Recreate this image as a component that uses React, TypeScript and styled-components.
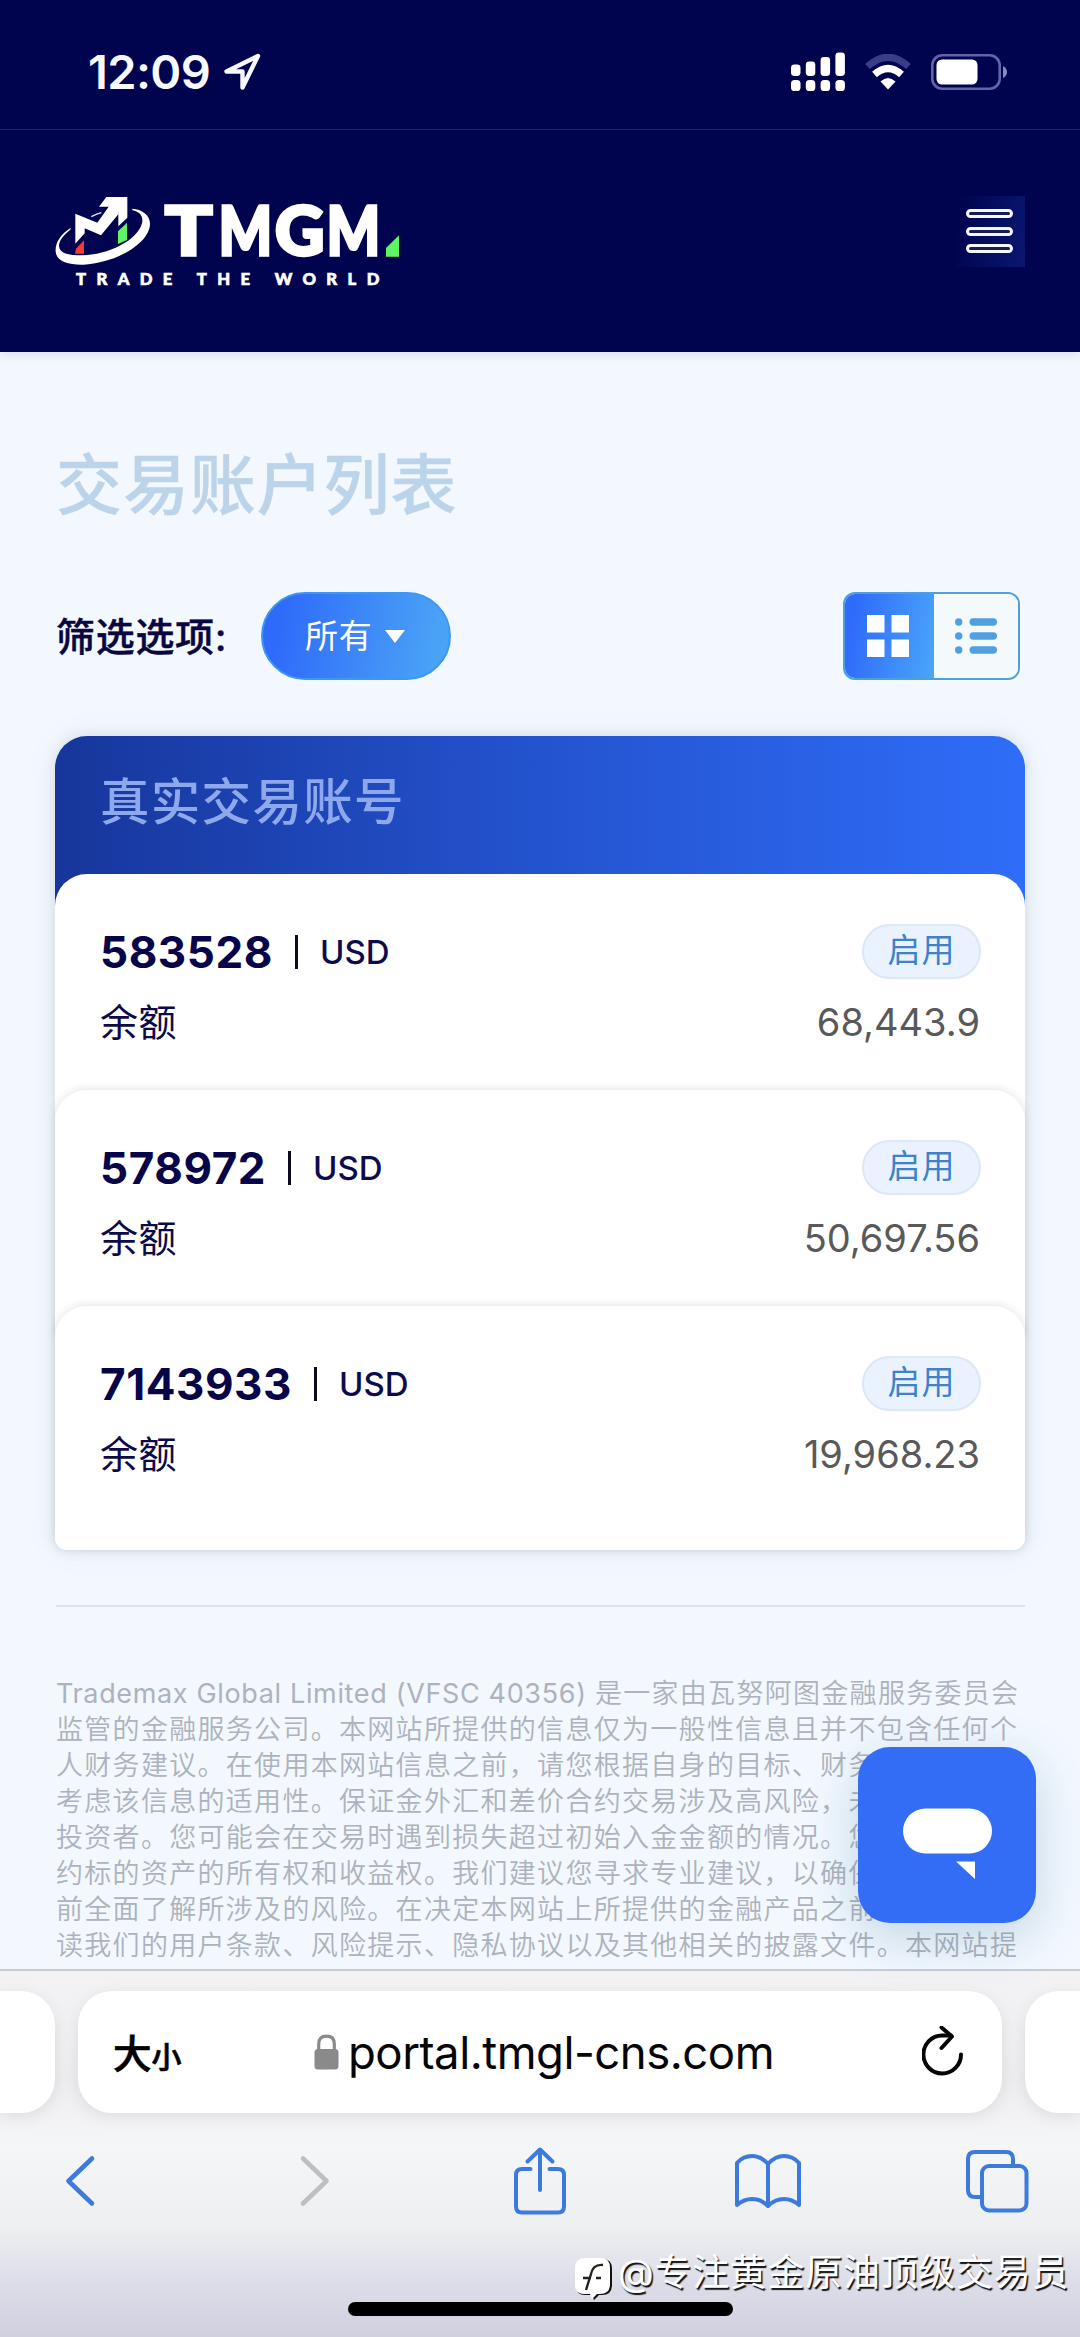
import React from 'react';
import styled, { createGlobalStyle } from 'styled-components';

const GlobalStyle = createGlobalStyle`
  * { box-sizing: border-box; }
  body { margin: 0; background: #f2f8fe; }
`;

const Screen = styled.div`
  position: relative;
  width: 1080px;
  height: 2337px;
  overflow: hidden;
  display: flex;
  flex-direction: column;
  background: #f2f8fe;
  font-family: Inter, 'Noto Sans CJK SC', sans-serif;
`;

const StatusBar = styled.div`
  flex: none;
  height: 130px;
  display: flex;
  align-items: center;
  justify-content: space-between;
  padding: 15px 72px 0 88px;
  background: #00044f;
  border-bottom: 1px solid #23276a;
`;

const StatusGroup = styled.div<{ $gap: number }>`
  display: flex;
  align-items: center;
  gap: ${(p) => p.$gap}px;
  height: 46px;
`;

const Clock = styled.span`
  font-size: 47px;
  font-weight: 600;
  line-height: 46px;
  letter-spacing: -0.6px;
  color: #f7f9ff;
`;

const SiteHeader = styled.header`
  flex: none;
  height: 222px;
  display: flex;
  align-items: flex-start;
  justify-content: space-between;
  padding: 65px 55px 0 55px;
  background: #00044f;
  box-shadow: 0 3px 10px rgba(20, 10, 60, 0.1);
`;

const LogoMark = styled.svg`
  overflow: visible;
`;

const MenuButton = styled.button`
  width: 71px;
  height: 71px;
  margin-top: 1px;
  padding: 13px 12px 14px;
  border: 0;
  display: flex;
  flex-direction: column;
  justify-content: space-between;
  background: linear-gradient(100deg, rgba(12, 28, 124, 0) 8%, #0a1770 100%);
`;

const MenuLine = styled.span`
  height: 9px;
  border: 3px solid #f5f7ff;
  border-radius: 5px;
  background: #1a1a55;
`;

const Main = styled.main`
  flex: none;
  height: 1617px;
  overflow: hidden;
  padding: 85px 56px 0;
`;

const PageTitle = styled.h1`
  margin: 0;
  font-size: 66px;
  font-weight: 500;
  line-height: 96px;
  letter-spacing: 0.9px;
  color: #bcd4ea;
  -webkit-text-stroke: 0.4px #bcd4ea;
`;

const FilterRow = styled.div`
  display: flex;
  align-items: center;
  height: 88px;
  margin-top: 59px;
  padding-right: 4px;
`;

const FilterLabel = styled.span`
  width: 205px;
  padding-bottom: 5px;
  font-size: 39px;
  font-weight: 500;
  letter-spacing: 0.7px;
  white-space: nowrap;
  color: #0a0640;
  -webkit-text-stroke: 0.4px #0a0640;
`;

const Select = styled.button`
  width: 190px;
  height: 88px;
  padding: 0 0 0 42px;
  display: flex;
  align-items: center;
  gap: 12px;
  border: 2px solid #3f97f4;
  border-radius: 44px;
  background: linear-gradient(100deg, #2f6afa 10%, #4aa2f6 90%);
  font-family: inherit;
  font-size: 33px;
  line-height: 40px;
  letter-spacing: 0.8px;
  color: #fff;
`;

const Toggle = styled.div`
  width: 177px;
  height: 88px;
  margin-left: auto;
  display: grid;
  grid-template-columns: 89px 1fr;
  overflow: hidden;
  border: 2px solid #4f9fdc;
  border-radius: 12px;
`;

const ToggleItem = styled.div<{ $active?: boolean }>`
  display: flex;
  align-items: center;
  justify-content: center;
  padding-right: ${(p) => (p.$active ? 4 : 0)}px;
  background: ${(p) => (p.$active ? 'linear-gradient(100deg, #2f6afa 10%, #4aa6fb 100%)' : '#f4f9fc')};
`;

const Accounts = styled.section`
  width: 970px;
  margin: 56px 0 0 -1px;
  border-radius: 32px 32px 12px 12px;
  background: linear-gradient(90deg, #17369b 0%, #2453cf 50%, #2f6df8 100%) top / 100% 190px no-repeat;
  box-shadow: 0 0 14px rgba(60, 70, 100, 0.14), 0 0 36px rgba(60, 70, 100, 0.05);
`;

const AccountsTitle = styled.h2`
  height: 138px;
  margin: 0;
  padding: 28px 0 0 45px;
  font-size: 49.5px;
  font-weight: 500;
  line-height: 76px;
  letter-spacing: 1.3px;
  color: #8ea8ec;
`;

const Account = styled.article<{ $last?: boolean; $lead?: boolean }>`
  height: ${(p) => (p.$last ? 244 : 248)}px;
  margin-bottom: ${(p) => (p.$last ? 0 : -32)}px;
  padding: 46px 45px 0 45px;
  border-radius: ${(p) => (p.$last ? '32px 32px 12px 12px' : '32px 32px 0 0')};
  background: #fff;
  position: relative;
  box-shadow: ${(p) => (p.$lead ? 'none' : '0 -2px 10px rgba(0, 0, 0, 0.09)')};
`;

const AccountLine = styled.div<{ $height: number }>`
  display: flex;
  align-items: center;
  height: ${(p) => p.$height}px;
`;

const AccountNumber = styled.strong`
  font-size: 44px;
  font-weight: 700;
  letter-spacing: 0.55px;
  color: #07044a;
`;

const Divider = styled.i`
  width: 3px;
  height: 34px;
  margin: 0 22px 0 22px;
  background: #0a0a20;
`;

const Currency = styled.span`
  font-size: 33px;
  font-weight: 500;
  color: #0d0b4c;
`;

const Status = styled.span`
  width: 119px;
  height: 55px;
  margin: -2px -1px 0 auto;
  padding-bottom: 2px;
  display: flex;
  align-items: center;
  justify-content: center;
  border: 2px solid #dde7f6;
  border-radius: 28px;
  background: #e9f2fe;
  font-size: 33px;
  line-height: 44px;
  letter-spacing: 1px;
  color: #3f82c8;
`;

const BalanceLabel = styled.span`
  padding-bottom: 5px;
  font-size: 38px;
  letter-spacing: 0.5px;
  color: #0d0b46;
`;

const Balance = styled.span`
  margin-left: auto;
  font-size: 38px;
  letter-spacing: 0;
  color: #595959;
`;

const Rule = styled.hr`
  width: 969px;
  height: 2px;
  margin: 55px 0 0;
  border: 0;
  background: #dce2e9;
`;

const Legal = styled.p`
  margin: 69px 0 0;
  font-size: 27px;
  font-weight: 350;
  line-height: 36px;
  letter-spacing: 1.3px;
  white-space: nowrap;
  color: #adb2bc;
`;

const LegalLine = styled.span`
  display: block;
  height: 36px;

  &:last-child { padding-top: 3px; }
`;

const CompanyName = styled.span`
  font-weight: 400;
  letter-spacing: 0.65px;
`;

const ChatButton = styled.button`
  position: absolute;
  left: 858px;
  top: 1747px;
  width: 178px;
  height: 176px;
  padding: 0;
  border: 0;
  border-radius: 32px;
  background: #336cf5;
  box-shadow: 0 14px 50px rgba(30, 90, 130, 0.22);
`;

const BrowserBar = styled.footer`
  position: relative;
  flex: 1;
  border-top: 2px solid #c9cbd1;
  display: flex;
  flex-direction: column;
  background: linear-gradient(180deg, #f3f3f5 0%, #ededef 30%, #f5f6f8 48%, #eeeff1 70%, #dddde9 85%, #d1d0df 100%);
`;

const TabStrip = styled.div`
  display: grid;
  grid-template-columns: 55px 924px 55px;
  gap: 23px;
  padding-top: 20px;
`;

const TabCard = styled.div<{ $side?: 'left' | 'right' }>`
  height: 122px;
  display: flex;
  align-items: center;
  background: #fff;
  border-radius: ${(p) => (p.$side === 'left' ? '0 34px 34px 0' : p.$side === 'right' ? '34px 0 0 34px' : '34px')};
  box-shadow: 0 4px 16px rgba(0, 0, 0, 0.08);
`;

const TextSize = styled.span`
  width: 236px;
  padding: 0 0 3px 35px;
  font-size: 38.5px;
  font-weight: 500;
  color: #000;
  -webkit-text-stroke: 0.7px #000;
  small { font-size: 30px; }
`;

const Address = styled.span`
  width: 574px;
  margin-left: 9px;
  font-size: 45.5px;
  letter-spacing: -0.5px;
  white-space: nowrap;
  color: #050505;
`;

const Tools = styled.nav`
  display: grid;
  grid-template-columns: 235px 214px 221px 231px 64px;
  align-items: center;
  height: 70px;
  margin-top: 33px;
  padding-left: 64px;
`;

const HomeIndicator = styled.div`
  width: 385px;
  height: 14px;
  margin: 86px 0 0 348px;
  border-radius: 7px;
  background: #000;
`;

const Watermark = styled.div`
  position: absolute;
  left: 574px;
  top: 2247px;
  height: 52px;
  display: flex;
  align-items: center;
  gap: 5px;
  white-space: nowrap;
  font-size: 37px;
  line-height: 52px;
  letter-spacing: 0.7px;
  color: #fff;
  text-shadow: 1.5px 1.5px 1px #111;

  svg { margin-top: 11px; }
`;

const Logo = () => (
  <LogoMark width="345" height="94" viewBox="45 45 1035 282">
    <path fill="#fff" d="M199 51H262V113L235 139V103L183 166L134 145V160L106 191V101L172 128L206 80H177Z" />
    <path fill="#fff" d="M93 143C60 163 45 190 47 215C50 245 85 255 130 254C225 250 330 190 330 131C330 104 305 88 277 86V91C299 95 311 108 306 130C292 182 205 225 125 226C85 226 58 220 57 198C57 183 70 165 90 150Z" />
    <path d="M154 110Q168 102 184 98" fill="none" stroke="#dfe6ff" strokeWidth="4" />
    <path fill="#f23b32" d="M105 221L108 206L132 181V221Z" />
    <path fill="#5ef464" d="M234 192V154L261 128V180Z" />
    <path fill="#5ef464" d="M1038 230V204L1077 166V230Z" />
    <g fill="#fff" fontFamily="Lato, sans-serif" fontWeight="900" fontSize="201" stroke="#fff" strokeWidth="10">
      <text x="375" y="225" textLength="142" lengthAdjust="spacingAndGlyphs">T</text>
      <text x="536" y="225" textLength="160" lengthAdjust="spacingAndGlyphs">M</text>
      <text x="705" y="225" textLength="148" lengthAdjust="spacingAndGlyphs">G</text>
      <text x="860" y="225" textLength="160" lengthAdjust="spacingAndGlyphs">M</text>
    </g>
    <text
      x="108"
      y="315"
      textLength="910"
      fill="#fff"
      stroke="#fff"
      strokeWidth="2"
      fontFamily="Lato, sans-serif"
      fontWeight="900"
      fontSize="50"
    >
      TRADE THE WORLD
    </text>
  </LogoMark>
);

const LocationIcon = () => (
  <svg width="39" height="38" viewBox="0 0 39 38" fill="none" stroke="#f7f9ff" strokeWidth="4.4" strokeLinejoin="round">
    <path d="M35 3L3.5 18.5H19.5V34.5Z" />
  </svg>
);

const SignalIcon = () => (
  <svg width="54" height="40" viewBox="0 0 54 40" fill="#fff">
    {[12.5, 9.5, 5, 0.5].map((top, i) => (
      <g key={top}>
        <rect x={i * 14.8} y={top} width="9.5" height={24 - top} rx="3.4" />
        <rect x={i * 14.8} y="28" width="9.5" height="11" rx="3.6" />
      </g>
    ))}
  </svg>
);

const WifiIcon = () => (
  <svg width="46" height="36" viewBox="0 0 46 36" fill="none">
    <path d="M2.5 12.5Q23 -6 43.5 12.5" stroke="#393d88" strokeWidth="7" />
    <path d="M9.5 20.5Q23 8.5 36.5 20.5" stroke="#fff" strokeWidth="7.2" />
    <path d="M15.5 27.5Q23 20.5 30.5 27.5L23 35.5Z" fill="#fff" />
  </svg>
);

const BatteryIcon = () => (
  <svg width="77" height="36" viewBox="0 0 77 36">
    <rect x="1.3" y="1.3" width="67.4" height="33.4" rx="10" fill="none" stroke="#6164a5" strokeWidth="2.6" />
    <rect x="5.5" y="5.5" width="41" height="25" rx="5.5" fill="#fff" />
    <path d="M72 12Q76 14 76 18Q76 22 72 24Z" fill="#8688bd" />
  </svg>
);

const GridIcon = () => (
  <svg width="42" height="42" viewBox="0 0 42 42" fill="#fff">
    <path d="M0 0H17.5V17.5H0ZM24.5 0H42V17.5H24.5ZM0 24.5H17.5V42H0ZM24.5 24.5H42V42H24.5Z" />
  </svg>
);

const ListIcon = () => (
  <svg width="42" height="36" viewBox="0 0 42 36" fill="#509fe0">
    {[4, 18, 32].map((y) => (
      <g key={y}>
        <circle cx="3.7" cy={y} r="3.7" />
        <rect x="14.5" y={y - 3.7} width="27.5" height="7.4" rx="3.7" />
      </g>
    ))}
  </svg>
);

const ChatIcon = () => (
  <svg width="178" height="176" viewBox="0 0 178 176" fill="#fff">
    <rect x="45" y="61.5" width="89" height="45" rx="22.5" />
    <path d="M98 114.5H117V132Z" />
  </svg>
);

const LockIcon = () => (
  <svg width="25" height="36" viewBox="0 0 25 36">
    <path d="M4.7 17V10Q4.7 2.2 12.5 2.2T20.3 10V17" fill="none" stroke="#8a8a8a" strokeWidth="3.2" />
    <rect x="0.5" y="15" width="24" height="20.5" rx="3.5" fill="#8a8a8a" />
  </svg>
);

const ReloadIcon = () => (
  <svg width="44" height="52" viewBox="2 3 44 52" fill="none" stroke="#050505" strokeWidth="4" strokeLinecap="round" strokeLinejoin="round">
    <path d="M41 31.5A18.8 19 0 1 1 22 12.5H31" />
    <path d="M21.5 4.5L32 13.5L21.5 25" />
  </svg>
);

const toolStroke = {
  fill: 'none',
  stroke: '#3c7ade',
  strokeWidth: 4,
  strokeLinecap: 'round',
  strokeLinejoin: 'round',
} as const;

const BackIcon = () => (
  <svg width="32" height="54" viewBox="0 0 32 54" {...toolStroke} strokeWidth={4.6}>
    <path d="M28 4.5L4.5 27L28 49.5" />
  </svg>
);

const ForwardIcon = () => (
  <svg width="32" height="54" viewBox="0 0 32 54" {...toolStroke} stroke="#bfbfc2" strokeWidth={4.6}>
    <path d="M4 4.5L27.5 27L4 49.5" />
  </svg>
);

const ShareIcon = () => (
  <svg width="54" height="70" viewBox="0 0 54 70" {...toolStroke}>
    <path d="M17.5 23H9Q3 23 3 29V60.5Q3 66.5 9 66.5H45Q51 66.5 51 60.5V29Q51 23 45 23H36.5" />
    <path d="M27 44V4M14.5 15.5L27 3.5L39.5 15.5" />
  </svg>
);

const BookIcon = () => (
  <svg width="68" height="56" viewBox="0 0 68 56" {...toolStroke}>
    <path d="M34 11Q27 3 18 3Q9 3 3 10V52Q10 46 18 46Q27 46 34 53Q41 46 50 46Q58 46 65 52V10Q59 3 50 3Q41 3 34 11ZM34 11V53" />
  </svg>
);

const TabsIcon = () => (
  <svg width="64" height="64" viewBox="0 0 64 64" {...toolStroke}>
    <path d="M16 48H10Q3 48 3 41V10Q3 3 10 3H41Q48 3 48 10V16" />
    <rect x="17" y="17" width="44.5" height="44.5" rx="7" />
  </svg>
);

const WatermarkBadge = () => (
  <svg width="39" height="44" viewBox="0 0 39 44">
    <path d="M12 2H29Q38 2 38 12V28Q38 38 28 38H25L20 43L18 38H11Q2 38 2 29V12Q2 2 12 2Z" fill="#111" />
    <path d="M11 1H27Q36 1 36 11V27Q36 37 26 37H23L18 42L16 37H10Q1 37 1 28V11Q1 1 11 1Z" fill="#fff" />
    <path d="M29 8Q19 7 17 17L12 33M9 21H17M22 21H27" fill="none" stroke="#222" strokeWidth="2.4" />
  </svg>
);

const accounts = [
  { id: '583528', balance: '68,443.9' },
  { id: '578972', balance: '50,697.56' },
  { id: '7143933', balance: '19,968.23' },
];

const legalLines = [
  '监管的金融服务公司。本网站所提供的信息仅为一般性信息且并不包含任何个',
  '人财务建议。在使用本网站信息之前，请您根据自身的目标、财务状况和需求',
  '考虑该信息的适用性。保证金外汇和差价合约交易涉及高风险，未必适合所有',
  '投资者。您可能会在交易时遇到损失超过初始入金金额的情况。您并不拥有合',
  '约标的资产的所有权和收益权。我们建议您寻求专业建议，以确保您在交易之',
  '前全面了解所涉及的风险。在决定本网站上所提供的金融产品之前，请务必阅',
  '读我们的用户条款、风险提示、隐私协议以及其他相关的披露文件。本网站提',
  '供的任何内容，不应被视为投资建议，您应在做出决定前寻求独立的专业意见',
];

export default function App() {
  return (
    <Screen>
      <GlobalStyle />
      <StatusBar>
        <StatusGroup $gap={13}>
          <Clock>12:09</Clock>
          <LocationIcon />
        </StatusGroup>
        <StatusGroup $gap={20}>
          <SignalIcon />
          <WifiIcon />
          <BatteryIcon />
        </StatusGroup>
      </StatusBar>
      <SiteHeader>
        <Logo />
        <MenuButton aria-label="菜单">
          <MenuLine />
          <MenuLine />
          <MenuLine />
        </MenuButton>
      </SiteHeader>
      <Main>
        <PageTitle>交易账户列表</PageTitle>
        <FilterRow>
          <FilterLabel>筛选选项:</FilterLabel>
          <Select>
            所有
            <svg width="20" height="13" viewBox="0 0 20 13" fill="#fff">
              <path d="M0 0H20L10 13Z" />
            </svg>
          </Select>
          <Toggle>
            <ToggleItem $active>
              <GridIcon />
            </ToggleItem>
            <ToggleItem>
              <ListIcon />
            </ToggleItem>
          </Toggle>
        </FilterRow>
        <Accounts>
          <AccountsTitle>真实交易账号</AccountsTitle>
          {accounts.map((a, i) => (
            <Account key={a.id} $lead={i === 0} $last={i === accounts.length - 1}>
              <AccountLine $height={64}>
                <AccountNumber>{a.id}</AccountNumber>
                <Divider />
                <Currency>USD</Currency>
                <Status>启用</Status>
              </AccountLine>
              <AccountLine $height={76}>
                <BalanceLabel>余额</BalanceLabel>
                <Balance>{a.balance}</Balance>
              </AccountLine>
            </Account>
          ))}
        </Accounts>
        <Rule />
        <Legal>
          <LegalLine>
            <CompanyName>Trademax Global Limited (VFSC 40356) </CompanyName>
            是一家由瓦努阿图金融服务委员会
          </LegalLine>
          {legalLines.map((line) => (
            <LegalLine key={line}>{line}</LegalLine>
          ))}
        </Legal>
      </Main>
      <BrowserBar>
        <TabStrip>
          <TabCard $side="left" />
          <TabCard>
            <TextSize>
              大<small>小</small>
            </TextSize>
            <LockIcon />
            <Address>portal.tmgl-cns.com</Address>
            <ReloadIcon />
          </TabCard>
          <TabCard $side="right" />
        </TabStrip>
        <Tools>
          <BackIcon />
          <ForwardIcon />
          <ShareIcon />
          <BookIcon />
          <TabsIcon />
        </Tools>
        <HomeIndicator />
      </BrowserBar>
      <ChatButton aria-label="在线客服">
        <ChatIcon />
      </ChatButton>
      <Watermark>
        <WatermarkBadge />
        <span>@专注黄金原油顶级交易员</span>
      </Watermark>
    </Screen>
  );
}
